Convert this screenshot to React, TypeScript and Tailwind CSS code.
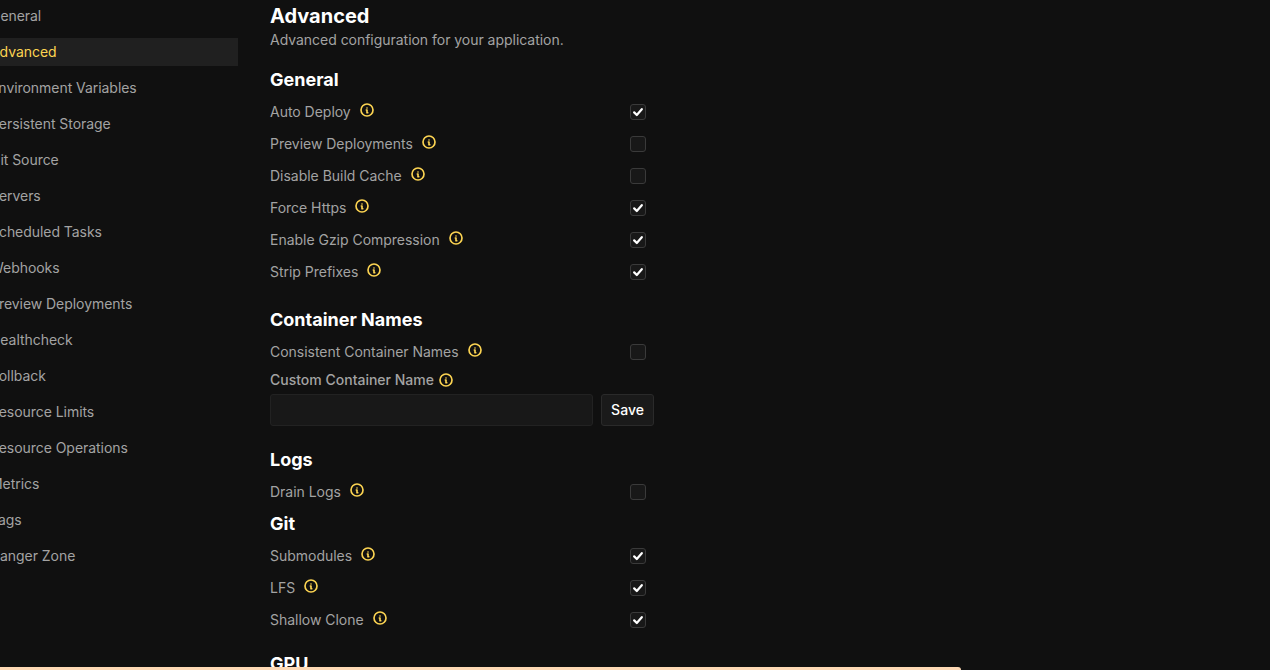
const nav = ["General","Advanced","Environment Variables","Persistent Storage","Git Source","Servers","Scheduled Tasks","Webhooks","Preview Deployments","Healthcheck","Rollback","Resource Limits","Resource Operations","Metrics","Tags","Danger Zone"];

function Info() {
  return (
    <svg width="16" height="16" viewBox="0 0 24 24" fill="none" stroke="#fcd452" strokeWidth="2.5" strokeLinecap="round" strokeLinejoin="round" className="shrink-0">
      <path d="M3 12a9 9 0 1 0 18 0a9 9 0 0 0 -18 0" />
      <path d="M12 9h.01" />
      <path d="M11 12h1v4h1" />
    </svg>
  );
}

function Row({ label, checked }: { label: string; checked?: boolean }) {
  return (
    <div className="flex items-center justify-between h-8 w-[384px] pr-2">
      <div className="flex items-center text-sm text-[#a3a3a3] tracking-[-0.02px]">
        <span>{label}</span>
        <span className="ml-2 -mt-[5px]"><Info /></span>
      </div>
      <div className="w-4 h-4 rounded-[3px] border border-[#3a3a3a] bg-[#181818] flex items-center justify-center">
        {checked && (
          <svg width="10" height="10" viewBox="0 0 10 10" fill="none" stroke="#ffffff" strokeWidth="2.2" strokeLinecap="round" strokeLinejoin="round">
            <path d="M1.2 5.4 3.8 8 8.8 2.2" />
          </svg>
        )}
      </div>
    </div>
  );
}

function H({ children, className }: { children: string; className?: string }) {
  return <h3 className={"text-lg leading-7 font-bold text-white " + (className ?? "")}>{children}</h3>;
}

export default function App() {
  return (
    <div className="relative flex items-start h-[670px] w-[1270px] overflow-hidden bg-[#101010] pt-[2px]" style={{ fontFamily: "Inter, sans-serif" }}>
      <nav className="flex flex-col gap-2 w-[238px] shrink-0 text-sm text-[#a3a3a3] tracking-[-0.05px]">
        {nav.map((n, i) => (
          <div key={n} className={"h-7 flex items-center -ml-[22px] pl-3 whitespace-nowrap " + (i === 1 ? "bg-[#202020] text-[#fcd452]" : "")}>{n}</div>
        ))}
      </nav>
      <main className="ml-8 flex flex-col">
        <h2 className="text-xl leading-7 font-bold text-white">Advanced</h2>
        <p className="text-sm text-[#a3a3a3] tracking-[-0.03px]">Advanced configuration for your application.</p>
        <H className="mt-4 mb-[2px]">General</H>
        <Row label="Auto Deploy" checked />
        <Row label="Preview Deployments" />
        <Row label="Disable Build Cache" />
        <Row label="Force Https" checked />
        <Row label="Enable Gzip Compression" checked />
        <Row label="Strip Prefixes" checked />
        <H className="mt-[18px] mb-[2px]">Container Names</H>
        <Row label="Consistent Container Names" />
        <div className="mt-[2px] flex items-center gap-1 text-sm font-medium text-[#a3a3a3] h-5">
          <span>Custom Container Name</span>
          <Info />
        </div>
        <div className="mt-1 flex gap-2 w-[384px]">
          <div className="h-8 flex-1 rounded-[3px] border border-[#222222] bg-[#181818]" />
          <button className="h-8 w-[53px] rounded-[3px] border border-[#2a2a2a] bg-[#1a1a1a] text-sm font-medium text-white">Save</button>
        </div>
        <H className="mt-5 mb-[2px]">Logs</H>
        <Row label="Drain Logs" />
        <H className="mt-[2px] mb-[2px]">Git</H>
        <Row label="Submodules" checked />
        <Row label="LFS" checked />
        <Row label="Shallow Clone" checked />
        <H className="mt-[14px]">GPU</H>
      </main>
      <div className="absolute left-0 bottom-0 h-[3px] w-[961px] rounded-tr bg-[#fdd9b5]" />
    </div>
  );
}
